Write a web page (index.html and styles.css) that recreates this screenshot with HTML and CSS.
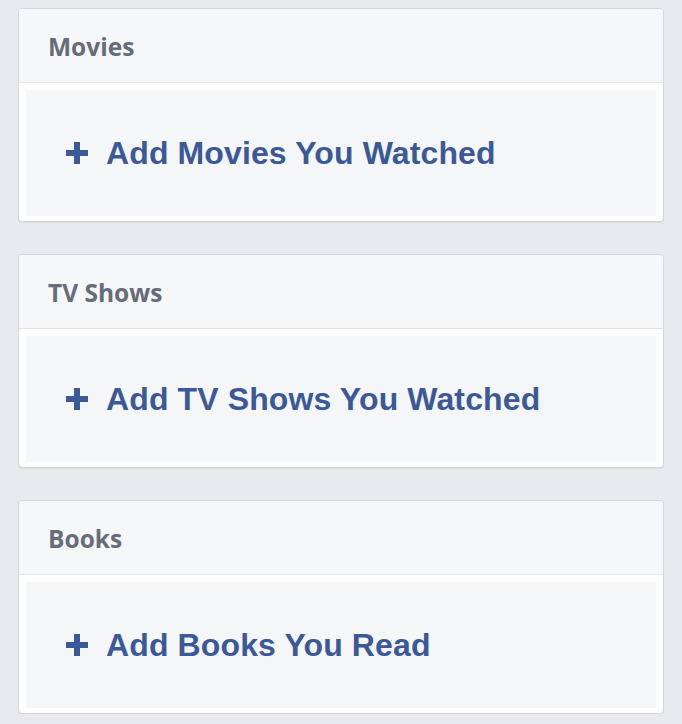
FILE: index.html
```html
<!DOCTYPE html>
<html lang="en">
<head>
<meta charset="utf-8">
<title>Favorites</title>
<link rel="stylesheet" href="styles.css">
</head>
<body>
<main class="list">
  <section class="card">
    <header class="card-head">Movies</header>
    <div class="card-body">
      <a class="add-link" href="#"><span class="plus" aria-hidden="true"></span>Add Movies You Watched</a>
    </div>
  </section>
  <section class="card">
    <header class="card-head">TV Shows</header>
    <div class="card-body">
      <a class="add-link" href="#"><span class="plus" aria-hidden="true"></span>Add TV Shows You Watched</a>
    </div>
  </section>
  <section class="card">
    <header class="card-head">Books</header>
    <div class="card-body">
      <a class="add-link" href="#"><span class="plus" aria-hidden="true"></span>Add Books You Read</a>
    </div>
  </section>
</main>
</body>
</html>
```
FILE: styles.css
```css
html, body {
  margin: 0;
  padding: 0;
  background: #e9eaed;
}
body {
  padding: 8px 18px 0 18px;
}
.list {
  display: flex;
  flex-direction: column;
  gap: 32px;
}
.card {
  background: #ffffff;
  border: 1px solid #d3d6db;
  border-radius: 4px;
  box-shadow: 0 1px 0 #dcdee2;
  overflow: hidden;
}
.card-head {
  height: 74px;
  box-sizing: border-box;
  display: flex;
  align-items: center;
  padding-left: 29px;
  padding-top: 1px;
  background: #f6f7f9;
  border-bottom: 1px solid #e2e4e8;
  font-family: "Open Sans", "DejaVu Sans", sans-serif;
  font-weight: 700;
  font-size: 24.5px;
  color: #656c7a;
}
.card-body {
  padding: 7px 7px 5px 7px;
}
.add-link {
  height: 126px;
  box-sizing: border-box;
  display: flex;
  align-items: center;
  padding-left: 40px;
  background: #f5f6f8;
  font-family: "Liberation Sans", Arial, sans-serif;
  font-weight: 700;
  font-size: 32px;
  letter-spacing: 0.12px;
  color: #3b5998;
  text-decoration: none;
}
.plus {
  position: relative;
  width: 22px;
  height: 22px;
  margin-right: 18px;
  flex: none;
}
.plus::before,
.plus::after {
  content: "";
  position: absolute;
  background: #3b5998;
}
.plus::before {
  left: 0;
  right: 0;
  top: 8px;
  height: 6px;
}
.plus::after {
  top: 0;
  bottom: 0;
  left: 8px;
  width: 6px;
}
```
